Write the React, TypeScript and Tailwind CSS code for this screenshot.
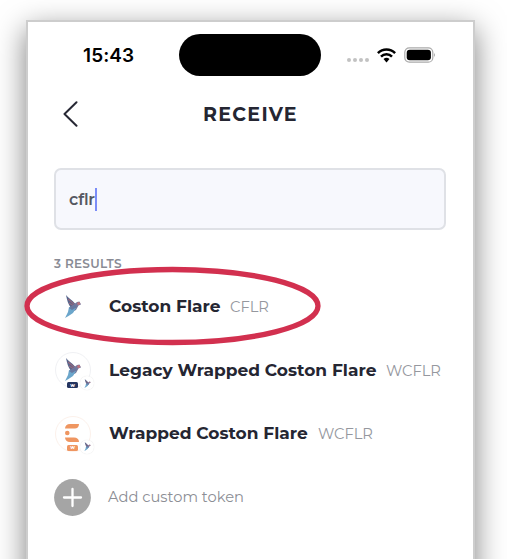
import React from "react";

function Bird({ className }: { className: string }) {
  return (
    <svg viewBox="0 0 16 23" className={className} fill="none">
      <path d="M1 0C3 3 7 5 10 8.5L11.5 13L6 13C3 9 2 5 1 0Z" fill="#56658c" />
      <path d="M3 4L9 9M4 8L9 11" stroke="#94667c" strokeWidth="1.2" />
      <path d="M4 13L8 10L12 7L14.5 6.5L16 9.5L13.5 10.5L11 15L7 17Z" fill="#77789c" />
      <path d="M4 12L11 13L8 18L3.5 21L0 23L3 17Z" fill="#6ba6cb" />
      <path d="M4 13L10 10L12 12L7 15Z" fill="#6878a0" />
      <circle cx="13.7" cy="8.6" r="1.5" fill="#c1727d" />
    </svg>
  );
}

function NetworkBadge() {
  return (
    <span className="absolute left-[24px] top-[23px] flex size-[14px] items-center justify-center rounded-full bg-white shadow-[0_0_1px_#ddd]">
      <Bird className="h-[9px] w-[7px]" />
    </span>
  );
}

function TokenIcon({ kind }: { kind: "plain" | "legacy" | "wrapped" }) {
  if (kind === "plain") {
    return (
      <div className="flex size-9 items-center justify-center">
        <Bird className="h-[23px] w-4" />
      </div>
    );
  }
  const legacy = kind === "legacy";
  return (
    <div className={`relative size-9 rounded-full border ${legacy ? "border-[#f0f1f4]" : "border-[#fcf1eb]"}`}>
      {legacy ? (
        <Bird className="absolute left-[9px] top-[5px] h-[23px] w-4" />
      ) : (
        <svg viewBox="0 0 15 19" className="absolute left-[9px] top-[7px] h-[19px] w-[15px]" fill="#ef9661">
          <path d="M5 0H14C14 3 12 4.5 10 4.5H0C0 2 2 0 5 0ZM0 13.5H9C12 13.5 14 15 14 18H5C2 18 0 16 0 13.5Z" />
          <circle cx="2.3" cy="9" r="2.3" />
        </svg>
      )}
      <span
        className={`absolute left-[11px] flex h-[6px] w-[11px] items-center justify-center rounded-[1.5px] text-[5px] font-bold leading-none text-white ${
          legacy ? "top-[29px] bg-[#24345f]" : "top-[28px] bg-[#ef9661]"
        }`}
      >
        w
      </span>
      <NetworkBadge />
    </div>
  );
}

const tokens = [
  { kind: "plain", name: "Coston Flare", symbol: "CFLR", nameClass: "w-[121px]" },
  { kind: "legacy", name: "Legacy Wrapped Coston Flare", symbol: "WCFLR", nameClass: "w-[277px]" },
  { kind: "wrapped", name: "Wrapped Coston Flare", symbol: "WCFLR", nameClass: "w-[209px]" },
] as const;

export default function App() {
  return (
    <div className="h-[559px] w-[507px] overflow-hidden bg-white pl-[26px] pt-[20px] font-['Montserrat','Inter',sans-serif]">
      <main className="relative h-[620px] w-[449px] border-2 border-[#cdcdcd] bg-white shadow-[0_9px_28px_rgba(0,0,0,0.5)]">
        <header className="flex h-[66px] items-center pl-[55px]">
          <span className="w-[96px] pt-[2px] font-['Inter',sans-serif] text-[19px] font-semibold tracking-[0.1px] text-black">15:43</span>
          <div className="h-[42px] w-[142px] rounded-full bg-black" />
          <div className="ml-[26px] mt-[10px] flex gap-[2px]">
            {[0, 1, 2, 3].map((i) => (
              <i key={i} className="size-1 rounded-full bg-[#c2c2c2]" />
            ))}
          </div>
          <svg viewBox="0 0 19 15" className="ml-[8px] h-[15px] w-[19px]" fill="none" stroke="#000" strokeWidth="2.5">
            <path d="M.9 5.2C5.8.3 13.2.3 18.1 5.2M4 8.6C7 5.5 12 5.5 15 8.6" />
            <path d="M6.5 11.1Q9.5 8.5 12.5 11.1L9.5 14.4Z" fill="#000" stroke="none" />
          </svg>
          <svg viewBox="0 0 32 16" className="ml-[8px] h-4 w-8" fill="none">
            <rect x=".8" y=".8" width="28" height="14.4" rx="4.5" stroke="#aaa" strokeWidth="1.2" />
            <rect x="2.7" y="2.7" width="24.2" height="10.6" rx="3" fill="#000" />
            <path d="M30 5.7Q31.8 8 30 10.3Z" fill="#999" />
          </svg>
        </header>
        <nav className="mt-px flex h-[50px] items-center pl-[35px]">
          <svg viewBox="0 0 15 26" className="h-[26px] w-[15px]" fill="none" stroke="#272834" strokeWidth="2" strokeLinecap="round" strokeLinejoin="round">
            <path d="M13.5 1.3L1.5 13L13.5 24.7" />
          </svg>
          <h1 className="ml-[125px] pt-px text-[19px] font-bold leading-6 tracking-[1.3px] text-[#252632]">RECEIVE</h1>
        </nav>
        <div className="ml-[26px] mt-[29px] flex h-[62px] w-[392px] items-center rounded-[7px] border-2 border-[#dfe1e6] bg-[#f7f8fd] pl-[13px]">
          <span className="w-[26px] whitespace-nowrap pt-px text-[16px] font-semibold tracking-[-0.15px] text-[#555761]">cflr</span>
          <i className="h-[23px] w-[2px] bg-[#7b8df8]" />
        </div>
        <p className="ml-[26px] mt-[24px] h-[20px] whitespace-nowrap text-[12px] font-semibold leading-5 tracking-[0.3px] text-[#898b94]">3 RESULTS</p>
        <div className="mt-[1px]">
          {tokens.map((t) => (
            <div key={t.kind} className="flex h-[63.5px] items-center pl-[27px]">
              <TokenIcon kind={t.kind} />
              <span className={`ml-[18px] shrink-0 whitespace-nowrap text-[17px] font-bold tracking-[0.02px] text-[#252632] ${t.nameClass}`}>{t.name}</span>
              <span className="whitespace-nowrap pt-px text-[14.7px] font-normal text-[#95979e]">{t.symbol}</span>
            </div>
          ))}
          <div className="flex h-[63.5px] items-center pl-[26px]">
            <svg viewBox="0 0 37 37" className="size-[37px]">
              <circle cx="18.5" cy="18.5" r="18.4" fill="#a5a5a5" />
              <path d="M18.5 10V27M10 18.5H27" stroke="#fff" strokeWidth="2.3" strokeLinecap="round" />
            </svg>
            <span className="ml-[17px] whitespace-nowrap text-[14.7px] text-[#8c8e95]">Add custom token</span>
          </div>
        </div>
        <svg viewBox="0 0 297 80" className="absolute left-[-4px] top-[244px] h-20 w-[297px]" fill="none">
          <ellipse cx="148.5" cy="40" rx="145.5" ry="36.5" stroke="#d2304f" strokeWidth="5.3" />
        </svg>
      </main>
    </div>
  );
}
